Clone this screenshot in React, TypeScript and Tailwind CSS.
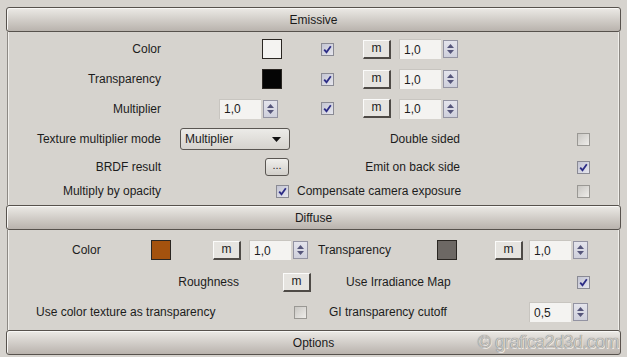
import React from "react";

function Header({ title, children }: { title: string; children?: React.ReactNode }) {
  return (
    <div className="relative h-[25px] rounded-[3px] border border-[#57524d] bg-gradient-to-b from-[#eceae6] to-[#b9b3ad] shadow-[inset_1px_1px_0_#f8f7f5] flex items-center justify-center text-[12px] text-[#1a1a1a]">
      {title}
      {children}
    </div>
  );
}

function Check({ checked }: { checked?: boolean }) {
  return (
    <div
      className={
        checked
          ? "w-[13px] h-[13px] shrink-0 border border-[#8a8a94] bg-gradient-to-br from-[#c3c4d2] to-[#e6e6ee] flex items-center justify-center"
          : "w-[13px] h-[13px] shrink-0 border border-[#9a9894] bg-gradient-to-br from-[#c9c7c3] to-[#efedea]"
      }
    >
      {checked && (
        <svg width="9" height="9" viewBox="0 0 9 9">
          <path d="M1.2 4.6 L3.5 7.2 L7.8 1.2" fill="none" stroke="#2c2c86" strokeWidth="1.8" />
        </svg>
      )}
    </div>
  );
}

function MBtn() {
  return (
    <div className="w-[28px] h-[19px] shrink-0 bg-[#e6e4e0] border-t border-l border-t-[#fbfbfa] border-l-[#fbfbfa] border-r-2 border-b-2 border-r-[#4e4a46] border-b-[#4e4a46] flex items-center justify-center text-[12px] leading-none pb-[2px]">
      m
    </div>
  );
}

function Swatch({ color }: { color: string }) {
  return <div className="w-[20px] h-[20px] shrink-0 border border-[#2a2622]" style={{ backgroundColor: color }} />;
}

function Spinner({ value }: { value: string }) {
  return (
    <div className="flex items-center shrink-0 w-[60px]">
      <div className="w-[42px] h-[20px] bg-[#f4f3f1] border-t border-l border-t-[#c8c5c0] border-l-[#c8c5c0] flex items-center pl-[4px] text-[12px]">
        {value}
      </div>
      <div className="ml-[2px] w-[15px] h-[18px] border border-[#9393a2] bg-gradient-to-b from-[#e4e4ec] to-[#cfd0dc] flex flex-col items-center justify-center gap-[2px]">
        <svg width="7" height="4" viewBox="0 0 7 4">
          <path d="M0 4 L3.5 0 L7 4 Z" fill="#55557a" />
        </svg>
        <svg width="7" height="4" viewBox="0 0 7 4">
          <path d="M0 0 L7 0 L3.5 4 Z" fill="#55557a" />
        </svg>
      </div>
    </div>
  );
}

function Panel({ children }: { children: React.ReactNode }) {
  return (
    <div className="mx-[1px] border-l border-r border-l-[#8d8984] border-r-[#8d8984] shadow-[inset_1px_0_0_#f2f0ec,inset_-1px_0_0_#f2f0ec]">
      {children}
    </div>
  );
}

export default function App() {
  return (
    <div className="w-[627px] h-[357px] overflow-hidden bg-[#d6d3ce] pt-[7px] px-[6px] font-['Liberation_Sans',Arial,sans-serif] text-[12px] text-[#1c1c1c]">
      <Header title="Emissive" />
      <Panel>
        <div className="h-[2px]" />
        <div className="h-[30px] flex items-center">
          <div className="w-[153px] text-right">Color</div>
          <div className="ml-[101px]"><Swatch color="#f4f3f1" /></div>
          <div className="ml-[39px]"><Check checked /></div>
          <div className="ml-[29px]"><MBtn /></div>
          <div className="ml-[8px]"><Spinner value="1,0" /></div>
        </div>
        <div className="h-[30px] flex items-center">
          <div className="w-[153px] text-right">Transparency</div>
          <div className="ml-[101px]"><Swatch color="#050505" /></div>
          <div className="ml-[39px]"><Check checked /></div>
          <div className="ml-[29px]"><MBtn /></div>
          <div className="ml-[8px]"><Spinner value="1,0" /></div>
        </div>
        <div className="h-[29px] flex items-center">
          <div className="w-[153px] text-right">Multiplier</div>
          <div className="ml-[58px]"><Spinner value="1,0" /></div>
          <div className="ml-[42px]"><Check checked /></div>
          <div className="ml-[29px]"><MBtn /></div>
          <div className="ml-[8px]"><Spinner value="1,0" /></div>
        </div>
        <div className="h-[32px] flex items-center">
          <div className="w-[153px] text-right">Texture multiplier mode</div>
          <div className="ml-[19px] w-[110px] h-[22px] rounded-[3px] border border-[#5a5652] bg-gradient-to-b from-[#ecebe8] to-[#d6d3ce] flex items-center justify-between pl-[4px] pr-[8px]">
            <span>Multiplier</span>
            <svg width="9" height="5" viewBox="0 0 9 5">
              <path d="M0 0 L9 0 L4.5 5 Z" fill="#111" />
            </svg>
          </div>
          <div className="w-[170px] text-right">Double sided</div>
          <div className="ml-[117px]"><Check /></div>
        </div>
        <div className="h-[24px] flex items-center">
          <div className="w-[153px] text-right">BRDF result</div>
          <div className="ml-[104px] w-[24px] h-[18px] rounded-[3px] border border-[#5a5652] bg-gradient-to-b from-[#f0efec] to-[#d2cfca] flex items-center justify-center text-[11px] leading-none pb-[3px]">
            ...
          </div>
          <div className="w-[171px] text-right">Emit on back side</div>
          <div className="ml-[117px]"><Check checked /></div>
        </div>
        <div className="h-[24px] flex items-center">
          <div className="w-[153px] text-right">Multiply by opacity</div>
          <div className="ml-[115px]"><Check checked /></div>
          <div className="ml-[8px] w-[163px] whitespace-nowrap">Compensate camera exposure</div>
          <div className="ml-[117px]"><Check /></div>
        </div>
        <div className="h-[2px]" />
      </Panel>
      <Header title="Diffuse" />
      <Panel>
        <div className="h-[38px] flex items-center pt-[2px]">
          <div className="ml-[64px] w-[79px]">Color</div>
          <Swatch color="#a4520e" />
          <div className="ml-[42px]"><MBtn /></div>
          <div className="ml-[8px]"><Spinner value="1,0" /></div>
          <div className="ml-[9px] w-[119px]">Transparency</div>
          <Swatch color="#6d6864" />
          <div className="ml-[38px]"><MBtn /></div>
          <div className="ml-[6px]"><Spinner value="1,0" /></div>
        </div>
        <div className="h-[28px] flex items-center">
          <div className="w-[231px] text-right">Roughness</div>
          <div className="ml-[44px]"><MBtn /></div>
          <div className="ml-[35px] w-[231px]">Use Irradiance Map</div>
          <Check checked />
        </div>
        <div className="h-[31px] flex items-center pt-[1px]">
          <div className="ml-[28px] w-[258px] whitespace-nowrap">Use color texture as transparency</div>
          <Check />
          <div className="ml-[22px] w-[200px]">GI transparency cutoff</div>
          <Spinner value="0,5" />
        </div>
        <div className="h-[3px]" />
      </Panel>
      <Header title="Options">
        <span className="absolute right-[1px] top-[0px] whitespace-nowrap text-[18px] leading-[22px] tracking-[-0.6px] text-[#cac8c5] [text-shadow:0_0_1px_#5e5b58,1px_1px_0_#f4f3f1]">
          © grafica2d3d.com
        </span>
      </Header>
    </div>
  );
}
